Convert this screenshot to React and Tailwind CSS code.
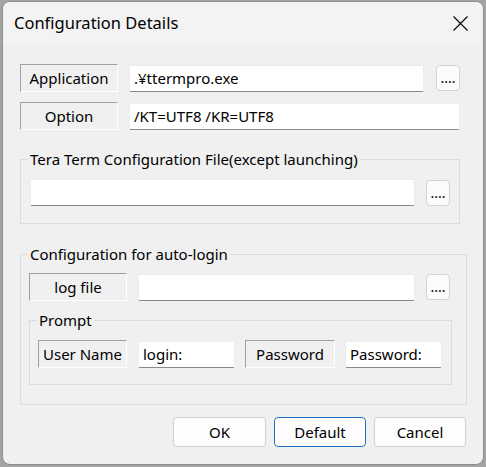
const font = { fontFamily: '"Noto Sans", "Open Sans", sans-serif' };

const SunkenLabel = ({ children, w = "w-[98px]" }) => (
  <div
    className={`${w} h-[28px] shrink-0 flex items-center justify-center border border-t-[#a0a0a0] border-l-[#a0a0a0] border-b-white border-r-white text-[15px] text-black`}
  >
    {children}
  </div>
);

const Edit = ({ w, value = "" }) => (
  <div
    className={`${w} h-[27px] shrink-0 bg-white border border-[#ececec] border-b-[#8a8a8a] rounded-[2px] flex items-center pl-[4px] text-[15px] text-black whitespace-nowrap overflow-hidden`}
  >
    {value}
  </div>
);

const Dots = () => (
  <button className="w-[24px] h-[26px] shrink-0 bg-[#fbfbfb] border border-[#d4d4d4] rounded-[4px] text-[14px] leading-none flex items-end justify-center pb-[5px] text-black">
    ....
  </button>
);

const Group = ({ label, className, legendClass, children }) => (
  <fieldset className={`border border-[#dcdcdc] ${className}`}>
    <legend className={`${legendClass} px-[2px] h-[20px] leading-[20px] text-[15px] text-black`}>
      {label}
    </legend>
    {children}
  </fieldset>
);

const DlgButton = ({ children, primary, w = "w-[92px]" }) => (
  <button
    className={`${w} h-[30px] rounded-[4px] bg-[#fdfdfd] text-[15px] text-black border ${
      primary ? "border-[#1a6fc4]" : "border-[#d0d0d0]"
    }`}
  >
    {children}
  </button>
);

export default function App() {
  return (
    <div className="w-[486px] h-[467px] bg-[#a4a4a4] pl-[2px] pt-[1px]" style={font}>
      <div className="w-[482px] h-[464px] rounded-[8px] bg-[#f0f0f0] overflow-hidden flex flex-col border border-[#8c8c8c]">
        {/* Title bar */}
        <div className="h-[42px] shrink-0 bg-[#f3f3f3] flex items-center justify-between pl-[11px] pr-[15px]">
          <span className="text-[16.5px] text-black">Configuration Details</span>
          <svg width="15" height="15" viewBox="0 0 15 15" className="text-black">
            <path d="M0.5 0.5 L14.5 14.5 M14.5 0.5 L0.5 14.5" stroke="currentColor" strokeWidth="1.1" fill="none" />
          </svg>
        </div>

        {/* Client */}
        <div className="flex-1 flex flex-col pl-[17px] pt-[20px]">
          <div className="flex items-center">
            <SunkenLabel>Application</SunkenLabel>
            <div className="ml-[11px]">
              <Edit w="w-[295px]" value=".¥ttermpro.exe" />
            </div>
            <div className="ml-[12px]">
              <Dots />
            </div>
          </div>

          <div className="flex items-center mt-[10px]">
            <SunkenLabel>Option</SunkenLabel>
            <div className="ml-[11px]">
              <Edit w="w-[331px]" value="/KT=UTF8 /KR=UTF8" />
            </div>
          </div>

          <Group
            label="Tera Term Configuration File(except launching)"
            legendClass="-ml-[2px]"
            className="w-[440px] mt-[19px] pl-[9px] pt-[10px] pb-[17px]"
          >
            <div className="flex items-center">
              <Edit w="w-[385px]" />
              <div className="ml-[11px]">
                <Dots />
              </div>
            </div>
          </Group>

          <Group
            label="Configuration for auto-login"
            legendClass="-ml-[1px]"
            className="w-[447px] mt-[20px] pl-[8px] pt-[9px] pb-[19px]"
          >
            <div className="flex items-center">
              <SunkenLabel>log file</SunkenLabel>
              <div className="ml-[11px]">
                <Edit w="w-[277px]" />
              </div>
              <div className="ml-[11px]">
                <Dots />
              </div>
            </div>

            <Group
              label="Prompt"
              legendClass="-ml-[1px]"
              className="w-[423px] mt-[9px] pl-[8px] pt-[10px] pb-[16px]"
            >
              <div className="flex items-center">
                <SunkenLabel w="w-[89px]">User Name</SunkenLabel>
                <div className="ml-[11px]">
                  <Edit w="w-[97px]" value="login:" />
                </div>
                <div className="ml-[10px]">
                  <SunkenLabel w="w-[90px]">Password</SunkenLabel>
                </div>
                <div className="ml-[10px]">
                  <Edit w="w-[97px]" value="Password:" />
                </div>
              </div>
            </Group>
          </Group>

          <div className="flex justify-end gap-[8px] pr-[17px] mt-[12px]">
            <DlgButton w="w-[93px]">OK</DlgButton>
            <DlgButton primary>Default</DlgButton>
            <DlgButton>Cancel</DlgButton>
          </div>
        </div>
      </div>
    </div>
  );
}
